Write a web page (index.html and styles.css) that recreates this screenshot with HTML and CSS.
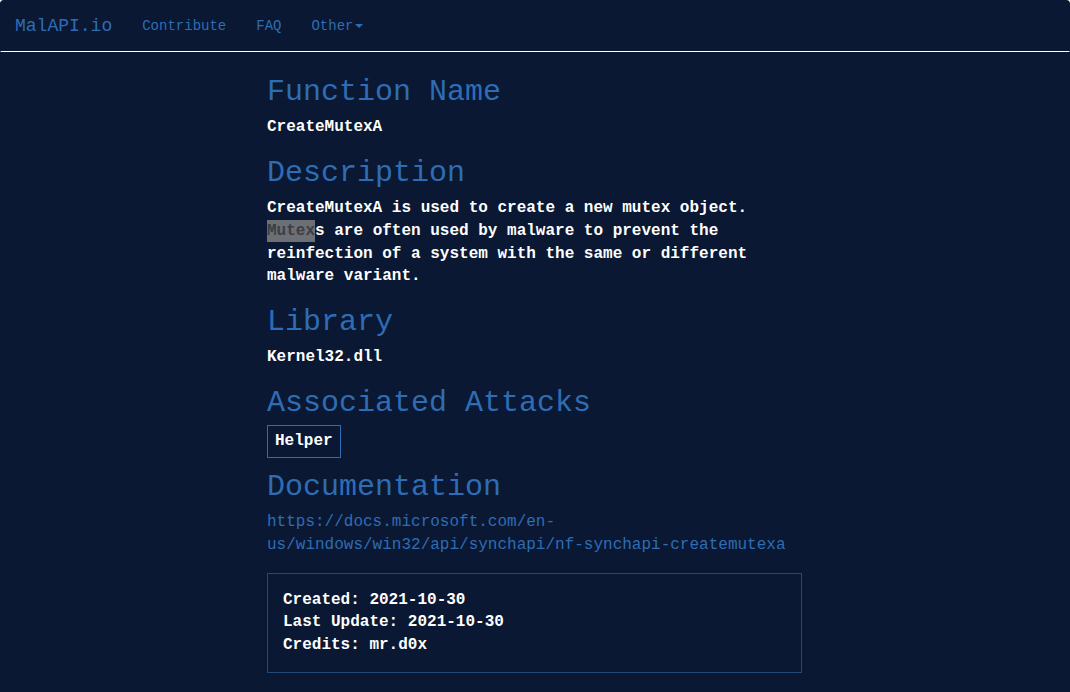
FILE: index.html
```html
<!DOCTYPE html>
<html lang="en">
<head>
<meta charset="utf-8">
<title>MalAPI.io - CreateMutexA</title>
<link rel="stylesheet" href="styles.css">
</head>
<body>
<div class="page">
  <header class="navbar">
    <a class="brand" href="#">MalAPI.io</a>
    <nav class="nav-links">
      <a href="#">Contribute</a>
      <a href="#">FAQ</a>
      <a href="#">Other<span class="caret"></span></a>
    </nav>
  </header>
  <main class="content">
    <div class="column">
      <h2>Function Name</h2>
      <p>CreateMutexA</p>
      <h2>Description</h2>
      <p>CreateMutexA is used to create a new mutex object. <span class="sel">Mutex</span>s are often used by malware to prevent the reinfection of a system with the same or different malware variant.</p>
      <h2>Library</h2>
      <p>Kernel32.dll</p>
      <h2>Associated Attacks</h2>
      <div class="tags"><span class="tag">Helper</span></div>
      <h2>Documentation</h2>
      <p><a class="doc-link" href="#">https://docs.microsoft.com/en-us/windows/win32/api/synchapi/nf-synchapi-createmutexa</a></p>
      <div class="info">
        <div>Created: 2021-10-30</div>
        <div>Last Update: 2021-10-30</div>
        <div>Credits: mr.d0x</div>
      </div>
    </div>
  </main>
</div>
</body>
</html>
```
FILE: styles.css
```css
html, body {
  margin: 0;
  background: #ffffff;
}
body {
  font-family: "Courier New", "Liberation Mono", monospace;
  font-size: 16px;
  line-height: 1.428571;
  font-weight: bold;
  color: #ffffff;
}
.page {
  min-height: 100vh;
  display: flex;
  flex-direction: column;
}
.navbar {
  display: flex;
  align-items: flex-start;
  height: 50px;
  background: #0a1833;
  border: 1px solid #0a1833;
  border-bottom-color: #ffffff;
  border-radius: 4px 4px 0 0;
}
.brand {
  padding: 15px 15px 15px 14px;
  font-size: 18px;
  line-height: 20px;
  font-weight: normal;
  color: #2e6db4;
  text-decoration: none;
}
.nav-links {
  display: flex;
}
.nav-links a {
  padding: 15px;
  font-size: 14px;
  line-height: 20px;
  font-weight: normal;
  color: #2e6db4;
  text-decoration: none;
}
.caret {
  display: inline-block;
  width: 0;
  height: 0;
  margin-left: 2px;
  vertical-align: middle;
  border-top: 4px solid;
  border-left: 4px solid transparent;
  border-right: 4px solid transparent;
}
.content {
  flex: 1;
  background: #0a1833;
  padding-top: 6px;
}
.column {
  width: 535px;
  margin-left: calc(25% - 0.5px);
}
h2 {
  font-size: 30px;
  line-height: 28px;
  font-weight: normal;
  color: #2e6db4;
  margin: 20px 0 10px;
}
p {
  margin: 0 0 10px;
}
.sel {
  background: #6c6f74;
  color: #3d3f44;
  box-shadow: 0 -2px 0 #6c6f74, 0 2px 0 #6c6f74;
}
.tags {
  display: flex;
  margin: -2px 0 -5px;
}
.tag {
  border: 1px solid #2e6db4;
  padding: 4px 7px;
  line-height: 22.86px;
}
.doc-link {
  color: #2e6db4;
  font-weight: normal;
  text-decoration: none;
}
.info {
  border: 1px solid #1f4a7a;
  padding: 15px;
  margin-top: 16px;
}
```
